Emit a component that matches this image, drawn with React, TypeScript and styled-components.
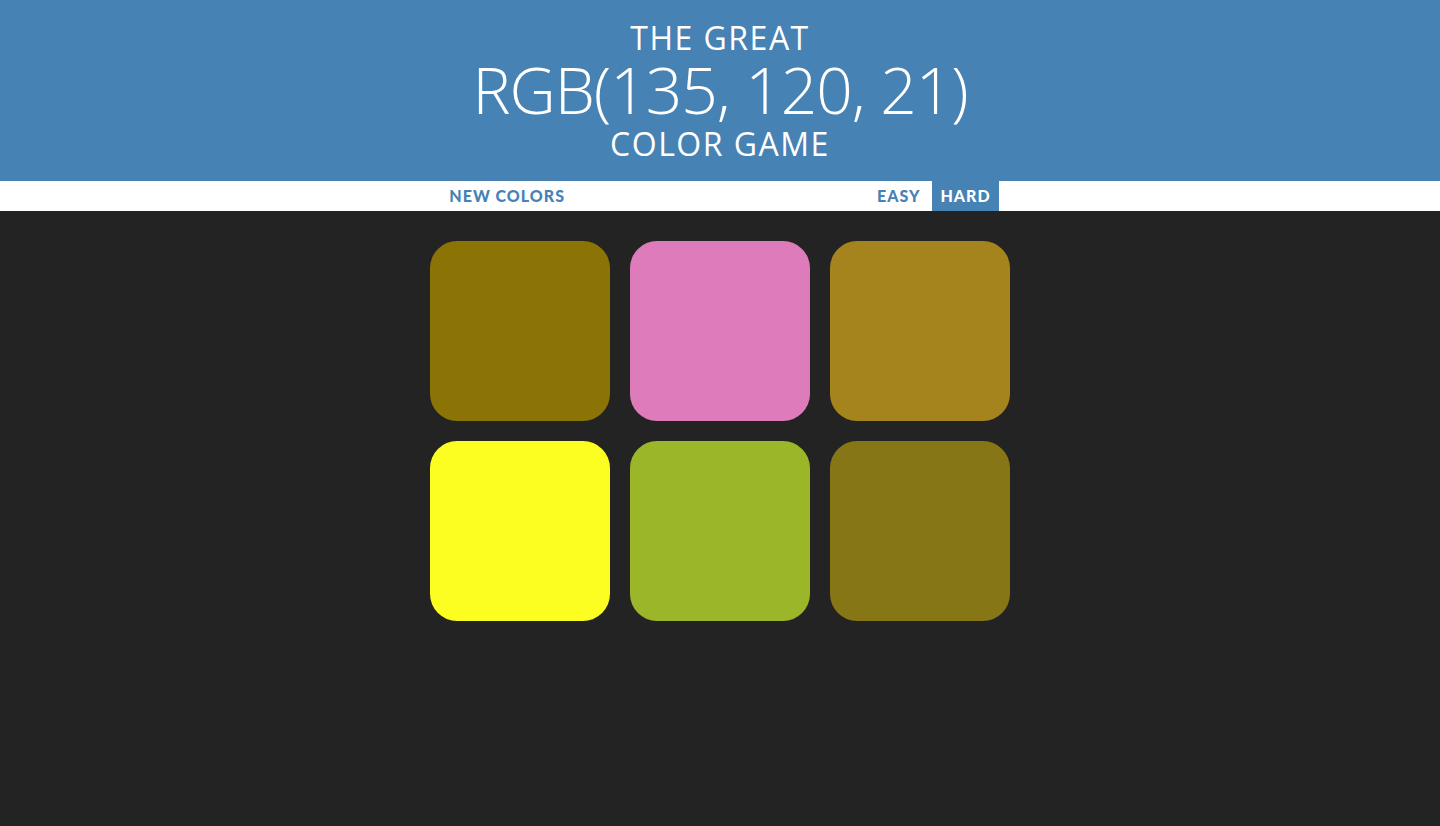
import React from "react";
import styled, { createGlobalStyle } from "styled-components";

const Global = createGlobalStyle`
  html, body { margin: 0; padding: 0; background: #232323; }
  * { box-sizing: border-box; }
`;

const Page = styled.div`
  min-height: 826px;
  background: #232323;
  font-family: "Open Sans", "DejaVu Sans", sans-serif;
`;

const Header = styled.h1`
  margin: 0;
  padding: 20px 0;
  background: steelblue;
  color: #fff;
  text-align: center;
  font-weight: 400;
  font-size: 32px;
  line-height: 1.1;
  text-transform: uppercase;
  font-family: "Open Sans", "DejaVu Sans", sans-serif;
`;

const Line = styled.span<{ $big?: boolean }>`
  display: block;
  font-size: ${(p) => (p.$big ? "200%" : "100%")};
  font-weight: ${(p) => (p.$big ? 300 : 400)};
  letter-spacing: ${(p) => (p.$big ? "-1px" : "1.5px")};
`;

const Stripe = styled.div`
  background: #fff;
  height: 30px;
  display: flex;
  justify-content: center;
  align-items: stretch;
  gap: 4px;
`;

const Btn = styled.button<{ $selected?: boolean }>`
  border: none;
  background: ${(p) => (p.$selected ? "steelblue" : "white")};
  color: ${(p) => (p.$selected ? "white" : "steelblue")};
  text-transform: uppercase;
  height: 100%;
  padding: 0 8px;
  font-family: "Lato", sans-serif;
  font-weight: 900;
  font-size: 16px;
  letter-spacing: 1px;
  outline: none;
  cursor: pointer;
`;

const Message = styled.span`
  display: inline-block;
  width: 20%;
`;

const Container = styled.div`
  margin: 20px auto;
  max-width: 600px;
  display: flex;
  flex-wrap: wrap;
`;

const Square = styled.div<{ $c: string }>`
  width: 180px;
  height: 180px;
  margin: 10px;
  border-radius: 27px;
  background: ${(p) => p.$c};
`;

const colors = [
  "rgb(139, 115, 6)",
  "rgb(222, 124, 187)",
  "rgb(166, 132, 29)",
  "rgb(252, 253, 33)",
  "rgb(155, 183, 41)",
  "rgb(135, 118, 21)",
];

export default function App() {
  return (
    <Page>
      <Global />
      <Header>
        <Line>The Great</Line>
        <Line $big>RGB(135, 120, 21)</Line>
        <Line>Color Game</Line>
      </Header>
      <Stripe>
        <Btn>New Colors</Btn>
        <Message />
        <Btn>Easy</Btn>
        <Btn $selected>Hard</Btn>
      </Stripe>
      <Container>
        {colors.map((c, i) => (
          <Square key={i} $c={c} />
        ))}
      </Container>
    </Page>
  );
}
